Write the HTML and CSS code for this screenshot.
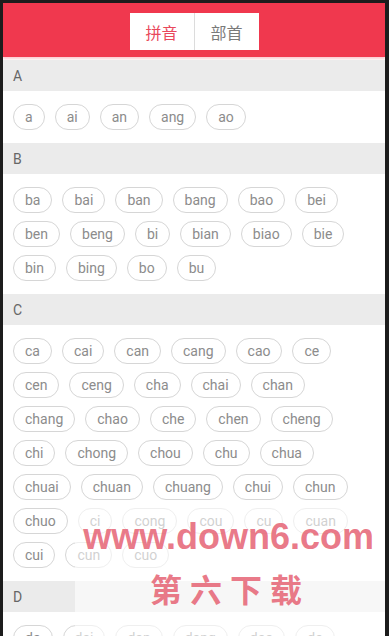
FILE: index.html
```html
<!DOCTYPE html>
<html lang="zh">
<head>
<meta charset="utf-8">
<link rel="stylesheet" href="styles.css">
</head>
<body>
<div class="app">
  <header class="topbar">
    <div class="seg">
      <span class="seg-item active">拼音</span>
      <span class="seg-item">部首</span>
    </div>
  </header>

  <section class="group">
    <div class="letter">A</div>
    <div class="chips">
      <div class="row"><span class="chip">a</span><span class="chip">ai</span><span class="chip">an</span><span class="chip">ang</span><span class="chip">ao</span></div>
    </div>
  </section>

  <section class="group">
    <div class="letter">B</div>
    <div class="chips">
      <div class="row"><span class="chip">ba</span><span class="chip">bai</span><span class="chip">ban</span><span class="chip">bang</span><span class="chip">bao</span><span class="chip">bei</span></div>
      <div class="row"><span class="chip">ben</span><span class="chip">beng</span><span class="chip">bi</span><span class="chip">bian</span><span class="chip">biao</span><span class="chip">bie</span></div>
      <div class="row"><span class="chip">bin</span><span class="chip">bing</span><span class="chip">bo</span><span class="chip">bu</span></div>
    </div>
  </section>

  <section class="group">
    <div class="letter">C</div>
    <div class="chips">
      <div class="row"><span class="chip">ca</span><span class="chip">cai</span><span class="chip">can</span><span class="chip">cang</span><span class="chip">cao</span><span class="chip">ce</span></div>
      <div class="row"><span class="chip">cen</span><span class="chip">ceng</span><span class="chip">cha</span><span class="chip">chai</span><span class="chip">chan</span></div>
      <div class="row"><span class="chip">chang</span><span class="chip">chao</span><span class="chip">che</span><span class="chip">chen</span><span class="chip">cheng</span></div>
      <div class="row"><span class="chip">chi</span><span class="chip">chong</span><span class="chip">chou</span><span class="chip">chu</span><span class="chip">chua</span></div>
      <div class="row"><span class="chip">chuai</span><span class="chip">chuan</span><span class="chip">chuang</span><span class="chip">chui</span><span class="chip">chun</span></div>
      <div class="row"><span class="chip">chuo</span><span class="chip">ci</span><span class="chip">cong</span><span class="chip">cou</span><span class="chip">cu</span><span class="chip">cuan</span></div>
      <div class="row"><span class="chip">cui</span><span class="chip">cun</span><span class="chip">cuo</span></div>
    </div>
  </section>

  <section class="group">
    <div class="letter">D</div>
    <div class="chips">
      <div class="row"><span class="chip">da</span><span class="chip">dai</span><span class="chip">dan</span><span class="chip">dang</span><span class="chip">dao</span><span class="chip">de</span></div>
    </div>
  </section>

  <div class="watermark">
    <div class="wm-url">www.down6.com</div>
    <div class="wm-name">第六下载</div>
  </div>
</div>
</body>
</html>
```

FILE: styles.css
```css
html, body {
  margin: 0;
  padding: 0;
  height: 100%;
  overflow: hidden;
}
body {
  background: #1c1c1c;
  font-family: Roboto, "Noto Sans", "Noto Sans CJK SC", sans-serif;
}
.app {
  position: relative;
  margin: 3px 4px 0 3px;
  height: 633px;
  background: #ffffff;
  overflow: hidden;
}
.topbar {
  height: 54px;
  background: #f0384e;
  display: flex;
  align-items: center;
  justify-content: center;
  box-shadow: 0 2px 2px rgba(240, 56, 78, 0.25);
  margin-bottom: 3px;
  padding-top: 3px;
  box-sizing: border-box;
}
.seg {
  display: flex;
  background: #fff;
  height: 37px;
}
.seg-item {
  width: 64px;
  display: flex;
  align-items: center;
  justify-content: center;
  font-family: "Noto Sans CJK SC", sans-serif;
  font-size: 16px;
  color: #7a7a7a;
}
.seg-item + .seg-item {
  border-left: 1px solid #dcdcdc;
}
.seg-item.active {
  color: #e9485c;
}
.letter {
  height: 31px;
  background: #ebebeb;
  display: flex;
  align-items: center;
  padding-left: 10px;
  font-size: 14px;
  color: #666;
}
.chips {
  padding: 13px 10px;
  display: flex;
  flex-direction: column;
  gap: 8px;
}
.row {
  display: flex;
  gap: 10px;
}
.chip {
  height: 26px;
  box-sizing: border-box;
  border: 1.5px solid #d6d6d6;
  border-radius: 13px;
  padding: 0 11px;
  display: flex;
  align-items: center;
  font-size: 14px;
  color: #8c8c8c;
}
.watermark {
  position: absolute;
  left: 72px;
  top: 502px;
  right: 0;
  bottom: 0;
  background: rgba(255, 255, 255, 0.6);
  display: flex;
  flex-direction: column;
  align-items: flex-end;
}
.wm-url {
  font-family: "Liberation Sans", Arial, sans-serif;
  font-weight: bold;
  font-size: 36px;
  color: rgba(228, 86, 104, 0.8);
  margin-top: 12px;
  margin-right: 11px;
  line-height: 40px;
}
.wm-name {
  align-self: flex-start;
  margin-left: 75px;
  margin-top: 13px;
  font-family: "Noto Sans CJK SC", sans-serif;
  font-weight: bold;
  font-size: 32px;
  letter-spacing: 8px;
  line-height: 36px;
  color: rgba(228, 86, 104, 0.8);
}
```
